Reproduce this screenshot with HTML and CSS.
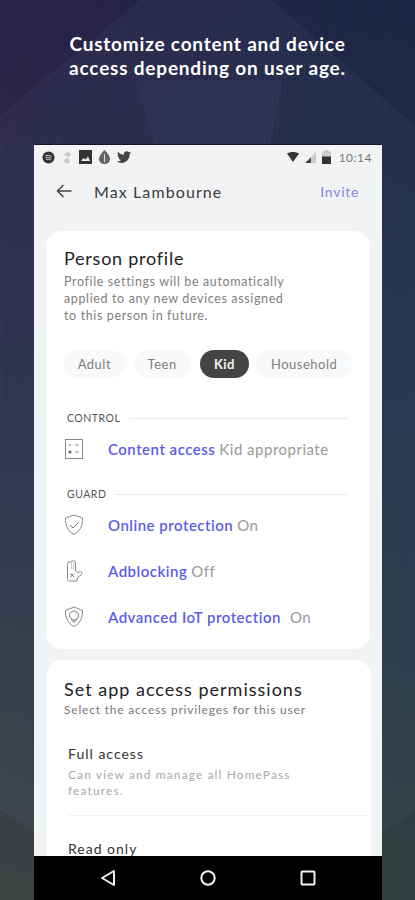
FILE: index.html
```html
<!DOCTYPE html>
<html lang="en">
<head>
    <meta charset="UTF-8">
    <meta name="viewport" content="width=device-width, initial-scale=1.0">
    <title>Person profile</title>
    <link rel="stylesheet" href="styles.css">
</head>
<body>

    <!-- mesh backdrop -->
    <svg class="backdrop" width="415" height="900" viewBox="0 0 415 900" aria-hidden="true">
        <defs>
            <linearGradient id="bg" x1="0" y1="0" x2="0" y2="1">
                <stop offset="0" stop-color="#2a2148"/>
                <stop offset="0.5" stop-color="#2b3148"/>
                <stop offset="1" stop-color="#3e4443"/>
            </linearGradient>
            <linearGradient id="bgRight" x1="0" y1="0" x2="0" y2="1">
                <stop offset="0" stop-color="#1b2745"/>
                <stop offset="0.5" stop-color="#22344a"/>
                <stop offset="1" stop-color="#2f403f"/>
            </linearGradient>
            <linearGradient id="side" x1="0" y1="0" x2="1" y2="0">
                <stop offset="0" stop-color="#fff"/>
                <stop offset="1" stop-color="#000"/>
            </linearGradient>
            <mask id="sideMask"><rect width="415" height="900" fill="url(#side)"/></mask>
            <pattern id="mesh" width="4" height="4" patternUnits="userSpaceOnUse">
                <path d="M0 0H4M0 0V4" stroke="#9a9ec8" stroke-width="0.4" stroke-opacity="0.16" fill="none"/>
            </pattern>
        </defs>
        <rect width="415" height="900" fill="url(#bgRight)"/>
        <rect width="415" height="900" fill="url(#bg)" mask="url(#sideMask)"/>
        <polygon points="140,0 272,0 415,126 415,812 340,860 75,860 0,810 0,115" fill="#7d80b0" fill-opacity="0.06"/>
        <polygon points="140,0 272,0 415,126 415,812 340,860 75,860 0,810 0,115" fill="url(#mesh)"/>
        <polygon points="135,80 283,80 270,145 155,145" fill="#8f93c0" fill-opacity="0.05"/>
    </svg>

    <h1 class="headline">Customize content and device<br>access depending on user age.</h1>

    <div class="phone">
        <div class="status-bar">
            <div class="status-icons">
                <svg width="13" height="13" viewBox="0 0 14 14"><circle cx="7" cy="7" r="6.500" fill="#333"/><path d="M3.500 5.200c2.300-.7 4.700-.5 7 .5M4 7.300c2-.5 4-.4 6 .5M4.500 9.200c1.600-.4 3.200-.3 5 .4" stroke="#ddd" fill="none"/></svg>
                <svg width="10" height="14" viewBox="0 0 10 14"><path d="M6 1L2 5l5 2-5 3 1 3h5l-1-3-1-2 3-3z" fill="#c8c9cb"/></svg>
                <svg width="13" height="14" viewBox="0 0 13 14"><rect width="13" height="14" fill="#333"/><path d="M2 11l2.500-3 2 1.500L9 6.500 11 11z" fill="#eee"/></svg>
                <svg width="11" height="14" viewBox="0 0 11 14"><path d="M5.500 0C8.500 3 11 6 11 9c0 3-2.500 5-5.500 5S0 12 0 9c0-3 2.500-6 5.500-9z" fill="#666"/><path d="M5.500 4v8" stroke="#ddd"/></svg>
                <svg width="14" height="12" viewBox="0 0 24 20"><path d="M24 2.400c-.9.400-1.800.700-2.800.800 1-.6 1.800-1.600 2.200-2.700-1 .6-2 1-3.100 1.200A4.900 4.900 0 0 0 11.900 6.200C7.800 6 4.200 4 1.700.9.400 3.200 1 6.100 3.200 7.500c-.8 0-1.600-.2-2.200-.6 0 2.400 1.700 4.400 3.900 4.900-.7.200-1.500.2-2.200.1.600 2 2.400 3.400 4.600 3.400A9.900 9.900 0 0 1 0 17.800 14 14 0 0 0 21.500 5.400c1-.7 1.900-1.700 2.500-3z" fill="#444"/></svg>
            </div>
            <div class="status-right">
                <svg width="12" height="10" viewBox="0 0 12 10"><path d="M0 1.500C3.500-.5 8.500-.5 12 1.500L6 10z" fill="#333"/></svg>
                <svg width="11" height="11" viewBox="0 0 11 11"><path d="M11 0v11H0z" fill="#ccc"/><path d="M6 5.500V11H0z" fill="#444"/></svg>
                <svg width="9" height="14" viewBox="0 0 9 14"><path d="M2.500 0h4v1.500H9V14H0V1.500h2.500z" fill="#ccc"/><rect y="6.500" width="9" height="7.500" fill="#333"/></svg>
                <span class="clock">10:14</span>
            </div>
        </div>

        <div class="toolbar">
            <svg class="back" width="16" height="14" viewBox="0 0 16 14"><path d="M15.500 7H1.500M7.500 1l-6 6 6 6" fill="none" stroke="#444" stroke-width="1.500"/></svg>
            <span class="toolbar-title">Max Lambourne</span>
            <span class="invite">Invite</span>
        </div>

        <div class="card profile-card">
            <h2 class="card-title">Person profile</h2>
            <p class="card-desc">Profile settings will be automatically<br>applied to any new devices assigned<br>to this person in future.</p>

            <div class="chips">
                <span class="chip chip-adult">Adult</span>
                <span class="chip chip-teen">Teen</span>
                <span class="chip chip-kid">Kid</span>
                <span class="chip chip-household">Household</span>
            </div>

            <div class="section-label label-control"><span>CONTROL</span><i></i></div>
            <div class="row row-first">
                <svg width="18" height="20" viewBox="0 0 18 20"><rect x="0.500" y="0.500" width="17" height="19" fill="none" stroke="#888"/><path d="M10 6h4M10 13h4" stroke="#999"/><path d="M4 6h2" stroke="#777"/><circle cx="5" cy="13" r="1.500" fill="#666"/></svg>
                <span class="row-link">Content access</span> <span class="row-val">Kid appropriate</span>
            </div>

            <div class="section-label label-guard"><span>GUARD</span><i></i></div>
            <div class="row row-first">
                <svg width="20" height="22" viewBox="0 0 20 22"><path d="M10 1l8.500 3c.4 7.500-2.500 13.500-8.500 16.500C4 17.500 1.100 11.500 1.500 4z" fill="none" stroke="#888"/><path d="M6 11l3 3 5.500-5.500" fill="none" stroke="#777"/></svg>
                <span class="row-link">Online protection</span> <span class="row-val">On</span>
            </div>
            <div class="row">
                <svg width="20" height="22" viewBox="0 0 20 22"><path d="M3.500 11V3.500C3.500 1.500 6 1.500 6.500 3V2c0-1.500 5-1.500 5 0v9l2.500 1.500 2.500-1c1.500 0 1.500 2 1 3L13 18v3H5c-1.200 0-1.500-1-1.500-2.500z" fill="none" stroke="#888"/><path d="M6.500 13.500l3.500 3.500M10 13.500l-3.500 3.500" stroke="#666"/><path d="M7.500 3v6M9.500 3v6" stroke="#aaa" stroke-width="0.700"/></svg>
                <span class="row-link">Adblocking</span> <span class="row-val">Off</span>
            </div>
            <div class="row">
                <svg width="20" height="22" viewBox="0 0 20 22"><path d="M10 1l8.500 3.500c.4 7-2.500 13-8.500 16C4 17.500 1.100 11.500 1.500 4.500z" fill="none" stroke="#888"/><circle cx="10" cy="9.500" r="4.500" fill="none" stroke="#777"/><path d="M7 13l3 3.500 3-3.500" fill="none" stroke="#777"/></svg>
                <span class="row-link">Advanced IoT protection</span> <span class="row-val row-val-wide">On</span>
            </div>
        </div>

        <div class="card access-card">
            <h2 class="card-title card-title-wide">Set app access permissions</h2>
            <p class="access-sub">Select the access privileges for this user</p>

            <div class="option">
                <h3 class="option-title">Full access</h3>
                <p class="option-desc">Can view and manage all HomePass<br>features.</p>
            </div>
            <div class="option option-last">
                <h3 class="option-title">Read only</h3>
            </div>
        </div>

        <div class="nav-bar">
            <svg width="16" height="18" viewBox="0 0 16 18"><path d="M14 2v14L2 9z" fill="none" stroke="#f2f2f2" stroke-width="2" stroke-linejoin="round"/></svg>
            <svg width="16" height="16" viewBox="0 0 16 16"><circle cx="8" cy="8" r="6.700" fill="none" stroke="#f2f2f2" stroke-width="2"/></svg>
            <svg width="16" height="16" viewBox="0 0 16 16"><rect x="1.500" y="1.500" width="13" height="13" rx="1" fill="none" stroke="#f2f2f2" stroke-width="2"/></svg>
        </div>
    </div>

</body>
</html>
```

FILE: styles.css
```css
* {
    box-sizing: border-box;
}
html, body {
    margin: 0;
    padding: 0;
}
body {
    position: relative;
    width: 415px;
    height: 900px;
    overflow: hidden;
    font-family: Lato, "Open Sans", sans-serif;
    background: #2a2f48;
}
.backdrop {
    position: absolute;
    top: 0;
    left: 0;
}
.headline {
    position: relative;
    margin: 0;
    height: 145px;
    padding-top: 32px;
    font-size: 19px;
    font-weight: 700;
    line-height: 24px;
    letter-spacing: 0.8px;
    text-align: center;
    color: #fff;
}
.phone {
    position: relative;
    display: flex;
    flex-direction: column;
    width: 348px;
    height: 755px;
    margin-left: 34px;
    overflow: hidden;
    background: #f1f3f5;
    box-shadow: 0 -1px 0 #15152c;
}
.phone > * {
    flex: none;
}
.status-bar {
    display: flex;
    justify-content: space-between;
    align-items: center;
    height: 24px;
    padding: 0 10px 0 8px;
}
.status-icons, .status-right {
    display: flex;
    align-items: center;
    gap: 7px;
}
.status-right {
    gap: 6px;
}
.clock {
    margin-left: 2px;
    font-size: 12px;
    letter-spacing: 0.5px;
    color: #777;
}
.toolbar {
    display: flex;
    align-items: center;
    height: 44px;
    padding: 0 23px 0 22px;
}
.back {
    margin-right: 22px;
}
.toolbar-title {
    flex: 1;
    font-size: 16px;
    letter-spacing: 1.1px;
    color: #3a3a3a;
}
.invite {
    font-size: 14px;
    letter-spacing: 0.7px;
    color: #8585ee;
}
.card {
    margin: 18px 12px 0;
    padding: 0 18px;
    background: #fff;
    border-radius: 16px;
}
.profile-card {
    height: 418px;
    padding-top: 16px;
}
.access-card {
    height: 300px;
    margin-top: 11px;
    margin-right: 11px;
    padding-top: 18px;
    padding-right: 0;
}
.card-title {
    margin: 0;
    font-size: 18px;
    font-weight: 400;
    line-height: 22px;
    letter-spacing: 0.75px;
    color: #222;
}
.card-title-wide {
    letter-spacing: 1px;
}
.card-desc {
    margin: 4px 0 0;
    font-size: 12.500px;
    line-height: 17px;
    letter-spacing: 0.63px;
    color: #808080;
}
.chips {
    display: flex;
    height: 28px;
    margin-top: 26px;
}
.chip {
    display: flex;
    justify-content: center;
    align-items: center;
    height: 28px;
    font-size: 13px;
    letter-spacing: 0.5px;
    color: #808080;
    background: #f8f9fa;
    border-radius: 14px;
}
.chip-adult {
    width: 61px;
    margin-right: 9px;
}
.chip-teen {
    width: 57px;
    margin-right: 9px;
}
.chip-kid {
    width: 50px;
    margin-right: 7px;
    font-weight: 700;
    color: #f4f4f4;
    background: #444;
}
.chip-household {
    width: 96px;
}
.section-label {
    display: flex;
    align-items: center;
    gap: 9px;
    height: 14px;
    padding-left: 3px;
    margin-right: 4px;
    font-size: 10.500px;
    letter-spacing: 0.5px;
    color: #555;
}
.section-label i {
    flex: 1;
    height: 1px;
    background: #e8eaee;
}
.label-control {
    margin-top: 33px;
}
.label-guard {
    margin-top: 26px;
}
.row {
    display: flex;
    align-items: center;
    height: 22px;
    margin-top: 24px;
    font-size: 15px;
    letter-spacing: 0.5px;
}
.row-first {
    margin-top: 13px;
}
.row-first + .section-label {
    margin-top: 27px;
}
.row svg {
    flex: none;
    width: 20px;
    margin-right: 24px;
}
.row-link {
    font-weight: 600;
    color: #5c5ce8;
    margin-right: 4px;
}
.row-val {
    color: #999;
}
.row-val-wide {
    margin-left: 5px;
}
.access-sub {
    margin: 2px 0 0;
    font-size: 12px;
    line-height: 16px;
    letter-spacing: 0.8px;
    color: #777;
}
.option {
    margin-left: 4px;
    padding-top: 27px;
    height: 98px;
    border-bottom: 1px solid #f1f3f5;
}
.option-last {
    padding-top: 24px;
    border-bottom: 0;
}
.option-title {
    margin: 0;
    font-size: 14px;
    font-weight: 400;
    line-height: 18px;
    letter-spacing: 1px;
    color: #333;
}
.option-desc {
    margin: 4px 0 0;
    font-size: 12px;
    line-height: 16px;
    letter-spacing: 1.1px;
    color: #aaa;
}
.nav-bar {
    position: absolute;
    left: 0;
    right: 0;
    bottom: 0;
    display: flex;
    justify-content: space-between;
    align-items: center;
    height: 44px;
    padding: 0 66px;
    background: #000;
}
```
